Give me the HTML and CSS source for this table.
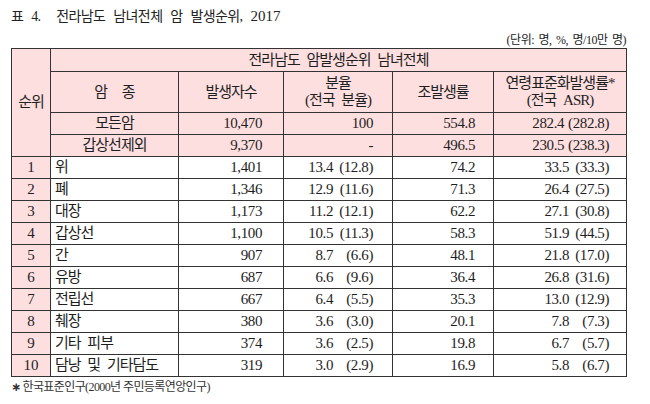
FILE: index.html
```html
<!DOCTYPE html>
<html lang="ko">
<head>
<meta charset="utf-8">
<title>표 4. 전라남도 남녀전체 암 발생순위, 2017</title>
<link rel="stylesheet" href="styles.css">
</head>
<body>
<div class="page">
  <div class="title">표 4.&nbsp; 전라남도 남녀전체 암 발생순위, <span class="yr">2017</span></div>
  <div class="unit">(단위: 명, %, 명/10만 명)</div>
  <table class="tbl">
    <colgroup>
      <col class="c-rank">
      <col class="c-name">
      <col class="c-cnt">
      <col class="c-pct">
      <col class="c-crude">
      <col class="c-asr">
    </colgroup>
    <tr class="h1">
      <th rowspan="4" class="ko">순위</th>
      <th colspan="5" class="ko">전라남도 암발생순위 남녀전체</th>
    </tr>
    <tr class="h2">
      <th class="ko sp">암 종</th>
      <th class="ko">발생자수</th>
      <th class="ko two">분율<br>(전국 분율)</th>
      <th class="ko">조발생률</th>
      <th class="ko two">연령표준화발생률*<br>(전국 ASR)</th>
    </tr>
    <tr class="row pink">
      <td class="ko ctr">모든암</td>
      <td class="num n-cnt">10,470</td>
      <td class="num n-pct">100</td>
      <td class="num n-crude">554.8</td>
      <td class="num n-asr"><span class="a">282.4</span><span class="b">(282.8)</span></td>
    </tr>
    <tr class="row pink">
      <td class="ko ctr">갑상선제외</td>
      <td class="num n-cnt">9,370</td>
      <td class="num n-pct">-</td>
      <td class="num n-crude">496.5</td>
      <td class="num n-asr"><span class="a">230.5</span><span class="b">(238.3)</span></td>
    </tr>
    <tr class="row">
      <td class="rank">1</td><td class="ko name">위</td><td class="num n-cnt">1,401</td>
      <td class="num n-pct"><span class="a">13.4</span><span class="b">(12.8)</span></td>
      <td class="num n-crude">74.2</td>
      <td class="num n-asr"><span class="a">33.5</span><span class="b">(33.3)</span></td>
    </tr>
    <tr class="row">
      <td class="rank">2</td><td class="ko name">폐</td><td class="num n-cnt">1,346</td>
      <td class="num n-pct"><span class="a">12.9</span><span class="b">(11.6)</span></td>
      <td class="num n-crude">71.3</td>
      <td class="num n-asr"><span class="a">26.4</span><span class="b">(27.5)</span></td>
    </tr>
    <tr class="row">
      <td class="rank">3</td><td class="ko name">대장</td><td class="num n-cnt">1,173</td>
      <td class="num n-pct"><span class="a">11.2</span><span class="b">(12.1)</span></td>
      <td class="num n-crude">62.2</td>
      <td class="num n-asr"><span class="a">27.1</span><span class="b">(30.8)</span></td>
    </tr>
    <tr class="row">
      <td class="rank">4</td><td class="ko name">갑상선</td><td class="num n-cnt">1,100</td>
      <td class="num n-pct"><span class="a">10.5</span><span class="b">(11.3)</span></td>
      <td class="num n-crude">58.3</td>
      <td class="num n-asr"><span class="a">51.9</span><span class="b">(44.5)</span></td>
    </tr>
    <tr class="row">
      <td class="rank">5</td><td class="ko name">간</td><td class="num n-cnt">907</td>
      <td class="num n-pct"><span class="a">8.7</span><span class="b">(6.6)</span></td>
      <td class="num n-crude">48.1</td>
      <td class="num n-asr"><span class="a">21.8</span><span class="b">(17.0)</span></td>
    </tr>
    <tr class="row">
      <td class="rank">6</td><td class="ko name">유방</td><td class="num n-cnt">687</td>
      <td class="num n-pct"><span class="a">6.6</span><span class="b">(9.6)</span></td>
      <td class="num n-crude">36.4</td>
      <td class="num n-asr"><span class="a">26.8</span><span class="b">(31.6)</span></td>
    </tr>
    <tr class="row">
      <td class="rank">7</td><td class="ko name">전립선</td><td class="num n-cnt">667</td>
      <td class="num n-pct"><span class="a">6.4</span><span class="b">(5.5)</span></td>
      <td class="num n-crude">35.3</td>
      <td class="num n-asr"><span class="a">13.0</span><span class="b">(12.9)</span></td>
    </tr>
    <tr class="row">
      <td class="rank">8</td><td class="ko name">췌장</td><td class="num n-cnt">380</td>
      <td class="num n-pct"><span class="a">3.6</span><span class="b">(3.0)</span></td>
      <td class="num n-crude">20.1</td>
      <td class="num n-asr"><span class="a">7.8</span><span class="b">(7.3)</span></td>
    </tr>
    <tr class="row">
      <td class="rank">9</td><td class="ko name">기타 피부</td><td class="num n-cnt">374</td>
      <td class="num n-pct"><span class="a">3.6</span><span class="b">(2.5)</span></td>
      <td class="num n-crude">19.8</td>
      <td class="num n-asr"><span class="a">6.7</span><span class="b">(5.7)</span></td>
    </tr>
    <tr class="row">
      <td class="rank">10</td><td class="ko name">담낭 및 기타담도</td><td class="num n-cnt">319</td>
      <td class="num n-pct"><span class="a">3.0</span><span class="b">(2.9)</span></td>
      <td class="num n-crude">16.9</td>
      <td class="num n-asr"><span class="a">5.8</span><span class="b">(6.7)</span></td>
    </tr>
  </table>
  <div class="note"><span class="star">∗</span>한국표준인구(2000년 주민등록연앙인구)</div>
</div>
</body>
</html>
```

FILE: styles.css
```css
html, body {
  margin: 0;
  padding: 0;
  background: #ffffff;
}

body {
  font-family: "Liberation Serif", "Noto Sans CJK KR", serif;
  color: #1e1e1e;
}

.page {
  width: 650px;
  padding: 6px 0 0 11px;
  box-sizing: border-box;
}

.title {
  font-size: 14px;
  line-height: 20px;
  height: 20px;
  letter-spacing: -0.6px;
  word-spacing: 5px;
  color: #222;
}

.yr {
  font-size: 15px;
  letter-spacing: 0;
}

.unit {
  width: 615px;
  margin-top: 6px;
  font-size: 12px;
  line-height: 16px;
  height: 16px;
  text-align: right;
  letter-spacing: -0.5px;
  word-spacing: 2px;
  color: #222;
}

.tbl {
  border-collapse: collapse;
  table-layout: fixed;
  width: 615px;
  border: 1px solid #333;
}

.c-rank { width: 39px; }
.c-name { width: 128px; }
.c-cnt { width: 105px; }
.c-pct { width: 109px; }
.c-crude { width: 101px; }
.c-asr { width: 133px; }

.tbl th,
.tbl td {
  border: 1px solid #333;
  padding: 0;
  font-weight: normal;
  vertical-align: middle;
  white-space: nowrap;
  overflow: visible;
}

.tbl th {
  background: #fddfe0;
  text-align: center;
}

.h1 { height: 23px; }
.h2 { height: 41px; }
.row { height: 22px; }

.ko {
  font-size: 15px;
  line-height: 17px;
  letter-spacing: -1px;
  word-spacing: 4px;
}

.sp { word-spacing: 12px; }

.two { line-height: 17px; }

.pink td { background: #fddfe0; }

.ctr { text-align: center; }

.name {
  text-align: left;
  padding-left: 4px !important;
}

.rank {
  background: #fddfe0;
  text-align: center;
  font-size: 15px;
  line-height: 17px;
}

.num {
  text-align: right;
  font-size: 15px;
  line-height: 17px;
  letter-spacing: -0.4px;
}

.n-cnt { padding-right: 21px !important; }
.n-pct { padding-right: 19px !important; }
.n-crude { padding-right: 18px !important; }
.n-asr { padding-right: 17px !important; }

.num .b {
  display: inline-block;
  min-width: 40px;
  padding-left: 4px;
  box-sizing: border-box;
  text-align: right;
}

.note {
  margin-top: 3px;
  font-size: 12px;
  line-height: 14px;
  letter-spacing: -0.6px;
  color: #333;
}

.star {
  font-family: "DejaVu Sans", sans-serif;
  font-weight: bold;
  font-size: 12px;
  margin-right: 2px;
}
```
